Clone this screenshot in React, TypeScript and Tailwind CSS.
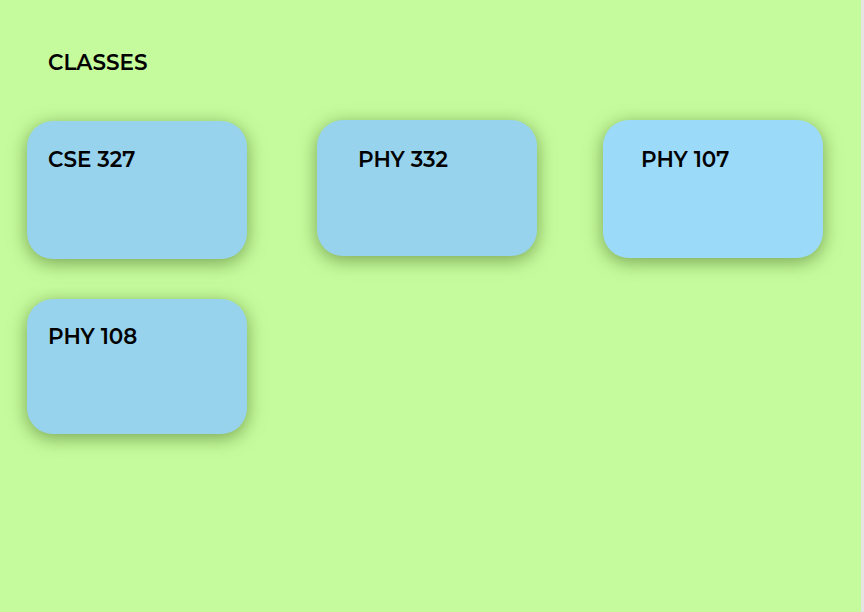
const classes = [
  { code: "CSE 327", box: "ml-[27px] mt-px h-[138px] pl-[21px] pt-[24px]", tone: "bg-[#98d3ed]" },
  { code: "PHY 332", box: "ml-[70px] h-[136px] pl-[41px] pt-[25px]", tone: "bg-[#98d3ed]" },
  { code: "PHY 107", box: "ml-[66px] h-[138px] pl-[38px] pt-[25px]", tone: "bg-[#9cdaf9]" },
];

const ClassCard = ({ code, box, tone }: { code: string; box: string; tone: string }) => (
  <div
    className={`w-[220px] shrink-0 rounded-[26px] shadow-[0_4px_18px_rgba(60,95,25,0.55)] ${box} ${tone}`}
  >
    <h3 className="text-[21.5px] font-semibold leading-[28px] text-black">{code}</h3>
  </div>
);

export default function App() {
  return (
    <div className="flex h-[612px] w-[864px] overflow-hidden font-['Montserrat','DejaVu_Sans',sans-serif]">
      <main className="h-full w-[861px] bg-[#c5fb9c]">
        <h1 className="ml-[48px] pt-[48px] text-[21.5px] font-semibold leading-[28px] text-black">
          CLASSES
        </h1>

        <div className="mt-[44px] flex items-start">
          {classes.map((c) => (
            <ClassCard key={c.code} {...c} />
          ))}
        </div>

        <div className="mt-[40px] flex items-start">
          <ClassCard code="PHY 108" box="ml-[27px] h-[135px] pl-[21px] pt-[23px]" tone="bg-[#98d3ed]" />
        </div>
      </main>
      <div className="h-full w-[3px] bg-[#e4e4e4]" />
    </div>
  );
}
